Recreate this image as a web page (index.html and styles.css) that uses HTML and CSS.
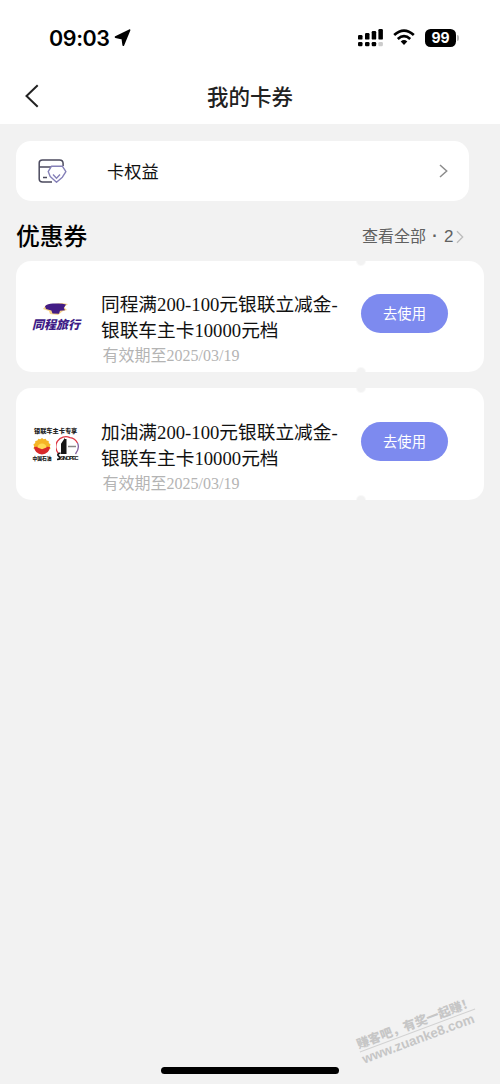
FILE: index.html
```html
<!DOCTYPE html>
<html lang="zh-CN">
<head>
<meta charset="utf-8">
<title>我的卡券</title>
<link rel="stylesheet" href="styles.css">
</head>
<body>
<div class="screen">
  <header class="top">
    <div class="status">
      <span class="time">09:03</span>
      <svg class="locate" width="18" height="18" viewBox="0 0 18 18"><path d="M15.5 1.2 1.6 8.1 8.4 9.6 9.3 16.2Z" stroke="#000" stroke-width="1.8" stroke-linejoin="round"/></svg>
      <svg class="signal" width="26" height="19" viewBox="0 0 26 19">
        <rect x="0" y="7" width="4.5" height="4.6" rx="1.2"/><rect x="7" y="5" width="4.5" height="6.6" rx="1.2"/><rect x="13.7" y="3" width="4.5" height="8.6" rx="1.2"/><rect x="20.4" y="1" width="4.5" height="10.6" rx="1.2"/>
        <rect x="0" y="14" width="4.5" height="4.3" rx="1.2"/><rect x="7" y="14" width="4.5" height="4.3" rx="1.2"/><rect x="13.7" y="14" width="4.5" height="4.3" rx="1.2"/><rect x="20.4" y="14" width="4.5" height="4.3" rx="1.2" fill="#ccc"/>
      </svg>
      <svg class="wifi" width="22" height="17" viewBox="0 0 22 17"><path d="M1.2 6.1Q11-2.8 20.8 6.1M4.8 9.9Q11 4.4 17.2 9.9" fill="none" stroke="#000" stroke-width="2.7"/><path d="M7.7 12.4Q11 9.8 14.3 12.4L11 16Z"/></svg>
      <span class="battery">99</span><span class="battery-tip"></span>
    </div>
    <div class="nav">
      <svg class="back" width="15" height="24" viewBox="0 0 15 24"><path d="M13.7 1.2 2.5 12 13.7 22.8" fill="none" stroke="#222" stroke-width="2"/></svg>
      <h1 class="title">我的卡券</h1>
    </div>
  </header>
  <main class="content">
    <section class="benefit">
      <svg class="benefit-icon" width="30" height="26" viewBox="0 0 30 26">
        <g fill="none" stroke="#4b4a5e" stroke-width="1.5"><path d="M15 24H5.5Q2.2 24 2.2 21V5Q2.2 2 5.5 2H22.5Q26.1 2 26.1 5.5V8M2.2 9H25M6 19.5H10"/></g>
        <path d="M14.5 8.2H25.3L28.9 13.6 25.4 19.2 19.5 24.3 13.2 18.6 11.2 13.6Z" fill="#fff" stroke="#8580b8" stroke-width="1.4" stroke-linejoin="round"/>
        <path d="M16 16.6 19.5 20.2 23 16.6" fill="none" stroke="#8580b8" stroke-width="1.4"/>
      </svg>
      <span class="benefit-name">卡权益</span>
      <svg class="benefit-arrow" width="9" height="14" viewBox="0 0 9 14"><path d="M1 1 7.7 7 1 13" fill="none" stroke="#8c8c8c" stroke-width="1.5"/></svg>
    </section>
    <div class="section-head">
      <h2 class="section-title">优惠券</h2>
      <span class="all">查看全部</span><span class="dot">·</span><span class="count">2</span>
      <svg class="all-arrow" width="8" height="14" viewBox="0 0 8 14"><path d="M1 1.2 6.7 7 1 12.8" fill="none" stroke="#bcbcbc" stroke-width="1.3"/></svg>
    </div>
    <section class="coupons">
      <article class="coupon">
        <div class="logo travel">
          <svg width="30" height="14" viewBox="0 0 30 14"><path d="M5 3 2 7 8 9 9 12 17 13 22 9 26 8 23 5 27 2 21 1Z" fill="#f8d489"/><path d="M4 4.2Q7 1 14 1.6 20 1 25 2.4L22.8 6 24 8.2 19 8.8 18 11.8 11.5 11.4 10.4 8.6 5 7Z" fill="#431c86"/></svg>
          <span class="travel-name">同程旅行</span>
        </div>
        <div class="info">
          <p class="name">同程满200-100元银联立减金-<br>银联车主卡10000元档</p>
          <p class="date">有效期至2025/03/19</p>
        </div>
        <button class="use">去使用</button>
      </article>
      <article class="coupon second">
        <div class="logo fuel">
          <span class="fuel-title">银联车主卡专享</span>
          <div class="brands">
            <div class="brand">
              <svg width="18" height="17" viewBox="0 0 18 17"><path d="m9 0 1.7 1.3 2-.5.9 1.8 2.1.4.1 2.1 1.8 1.3-.8 2 .8 2-1.8 1.2H2.2L.4 10.4l.8-2-.8-2 1.8-1.3L2.3 3l2.1-.4.9-1.8 2 .5Z" fill="#f4b526"/><path d="M1 9Q5 8 9 10 13 8 17 9 16 16 9 16.5 2 16 1 9Z" fill="#d9292a"/><path d="M4.5 9.5a4.5 4 0 0 1 9 0L9 11.3Z" fill="#ffda54"/></svg>
              <span class="brand-name">中国石油</span>
            </div>
            <svg width="24" height="25" viewBox="0 0 24 25"><path d="M3 18A10 10 0 0 1 14 1.6Q19 2 21.5 7" fill="none" stroke="#dd3744" stroke-width="1.3"/><path d="M19.5 18Q24 12 21.5 7" fill="none" stroke="#8262a0" stroke-width="1.3"/><path d="M6 18V8L8 5V18M9.5 18V3V18" fill="none" stroke="#151515" stroke-width="2"/><path d="M4.5 17Q0 18 3 20.5T1 23.5" fill="none" stroke="#151515" stroke-width="1.7"/><path d="M12 10.5H20" stroke="#888" stroke-width="1.5"/><text x="4" y="23.5" class="fuel-brand">SINOPEC</text></svg>
          </div>
        </div>
        <div class="info">
          <p class="name">加油满200-100元银联立减金-<br>银联车主卡10000元档</p>
          <p class="date">有效期至2025/03/19</p>
        </div>
        <button class="use">去使用</button>
      </article>
    </section>
  </main>
  <div class="watermark"><div class="mark-name">赚客吧，有奖一起赚！</div><div class="mark-url">www.zuanke8.com</div></div>
  <div class="home"></div>
</div>
</body>
</html>
```
FILE: styles.css
```css
* { box-sizing: border-box; }
body { margin: 0; }
h1, h2, p { margin: 0; }
svg { display: block; flex: none; }
.screen {
  position: relative;
  display: flex;
  flex-direction: column;
  width: 500px;
  height: 1084px;
  overflow: hidden;
  background: #f2f2f2;
  font-family: "Liberation Sans", "Noto Sans CJK SC", sans-serif;
}
.top { height: 124px; background: #fff; }
.status { display: flex; align-items: center; height: 68px; padding: 7px 0 0 49px; }
.time { width: 61px; font: 600 21.5px/26px Inter, sans-serif; letter-spacing: -.4px; }
.locate { margin-left: 4px; }
.signal { margin-left: 226px; }
.wifi { margin-left: 9px; }
.battery {
  width: 31px;
  height: 18px;
  margin-left: 10px;
  border-radius: 5.5px;
  background: #000;
  color: #fff;
  font: 700 14px/18px Inter, sans-serif;
  text-align: center;
}
.battery-tip { width: 2px; height: 6px; margin-left: 1px; border-radius: 0 2px 2px 0; background: #bbb; }
.nav { display: flex; align-items: center; height: 56px; padding-left: 24px; }
.title {
  margin: -1px 0 0 168px;
  color: #222;
  font: 500 21.5px/30px "Noto Sans CJK SC", sans-serif;
}
.content { padding: 17px 16px 0; }
.benefit {
  display: flex;
  align-items: center;
  width: 453px;
  height: 60px;
  padding: 0 21px;
  border-radius: 15px;
  background: #fff;
}
.benefit-name { margin: 2px 0 0 40px; color: #111; font-size: 17.2px; line-height: 26px; }
.benefit-arrow { margin-left: auto; }
.section-head { display: flex; align-items: center; height: 60px; padding: 9px 19px 0 0; color: #606060; }
.section-title {
  margin: -2px auto 0 0;
  color: #000;
  font: 500 23.8px/34px "Noto Sans CJK SC", sans-serif;
}
.all { margin-top: 2px; font-size: 16px; line-height: 24px; }
.dot { width: 18px; margin-top: 1px; font: 700 16px/24px "Liberation Sans", sans-serif; text-align: center; }
.count { width: 12px; margin-top: 2px; font-size: 17px; line-height: 24px; }
.all-arrow { margin: 2px 1px 0 0; }
.coupons { display: grid; gap: 16px; }
.coupon {
  display: flex;
  align-items: flex-start;
  height: 111px;
  padding-left: 14px;
  border-radius: 15px;
  background:
    radial-gradient(circle at 345px 0, #f2f2f2 3.5px, transparent 5.5px),
    radial-gradient(circle at 345px 100%, #f2f2f2 3.5px, transparent 5.5px),
    #fff;
}
.coupon.second { height: 112px; padding-top: 1px; }
.logo { width: 52px; flex: none; }
.travel { display: flex; flex-direction: column; align-items: center; padding-top: 41px; }
.travel-name {
  margin-top: -1px;
  color: #3e1c87;
  font: italic 800 12px/18px "Noto Sans CJK SC", sans-serif;
  white-space: nowrap;
}
.fuel { padding: 38px 0 0 2px; }
.fuel-title { display: block; width: 48px; padding-left: 2px; color: #222; font: 900 6.2px/8px "Noto Sans CJK SC", sans-serif; white-space: nowrap; }
.brands { display: flex; gap: 4px; padding-top: 1px; }
.brand { display: flex; flex-direction: column; align-items: center; width: 20px; padding-top: 2px; }
.brand-name { color: #222; font: 900 4.8px/6px "Noto Sans CJK SC", sans-serif; white-space: nowrap; }
.fuel-brand { font: 700 5.6px "Liberation Sans", sans-serif; letter-spacing: -1.1px; fill: #111; }
.info { width: 240px; margin-left: 19px; padding-top: 31px; white-space: nowrap; }
.name { color: #111; font: 18.7px/25.6px "Liberation Serif", "Noto Sans CJK SC", serif; }
.date { padding: 1px 0 0 1.5px; color: #b4b4b4; font: 16px/24px "Liberation Serif", "Noto Sans CJK SC", serif; }
.use {
  width: 87px;
  height: 39px;
  margin: 32.5px 0 0 20px;
  padding: 0 0 2px;
  border: 0;
  border-radius: 20px;
  background: #7d8aef;
  color: #fff;
  font: 14.3px/37px "Noto Sans CJK SC", sans-serif;
}
.watermark {
  position: absolute;
  left: 356px;
  top: 1015px;
  width: 123px;
  color: #c6c6c6;
  transform: rotate(-20.5deg);
  white-space: nowrap;
}
.mark-name { height: 16px; border-bottom: 1px solid #d2d2d2; font: 800 12.4px/14px "Noto Sans CJK SC", sans-serif; }
.mark-url { font: 700 13.4px/15px "Liberation Sans", sans-serif; }
.home { position: absolute; left: 161px; top: 1067px; width: 178px; height: 7px; border-radius: 4px; background: #000; }
```
